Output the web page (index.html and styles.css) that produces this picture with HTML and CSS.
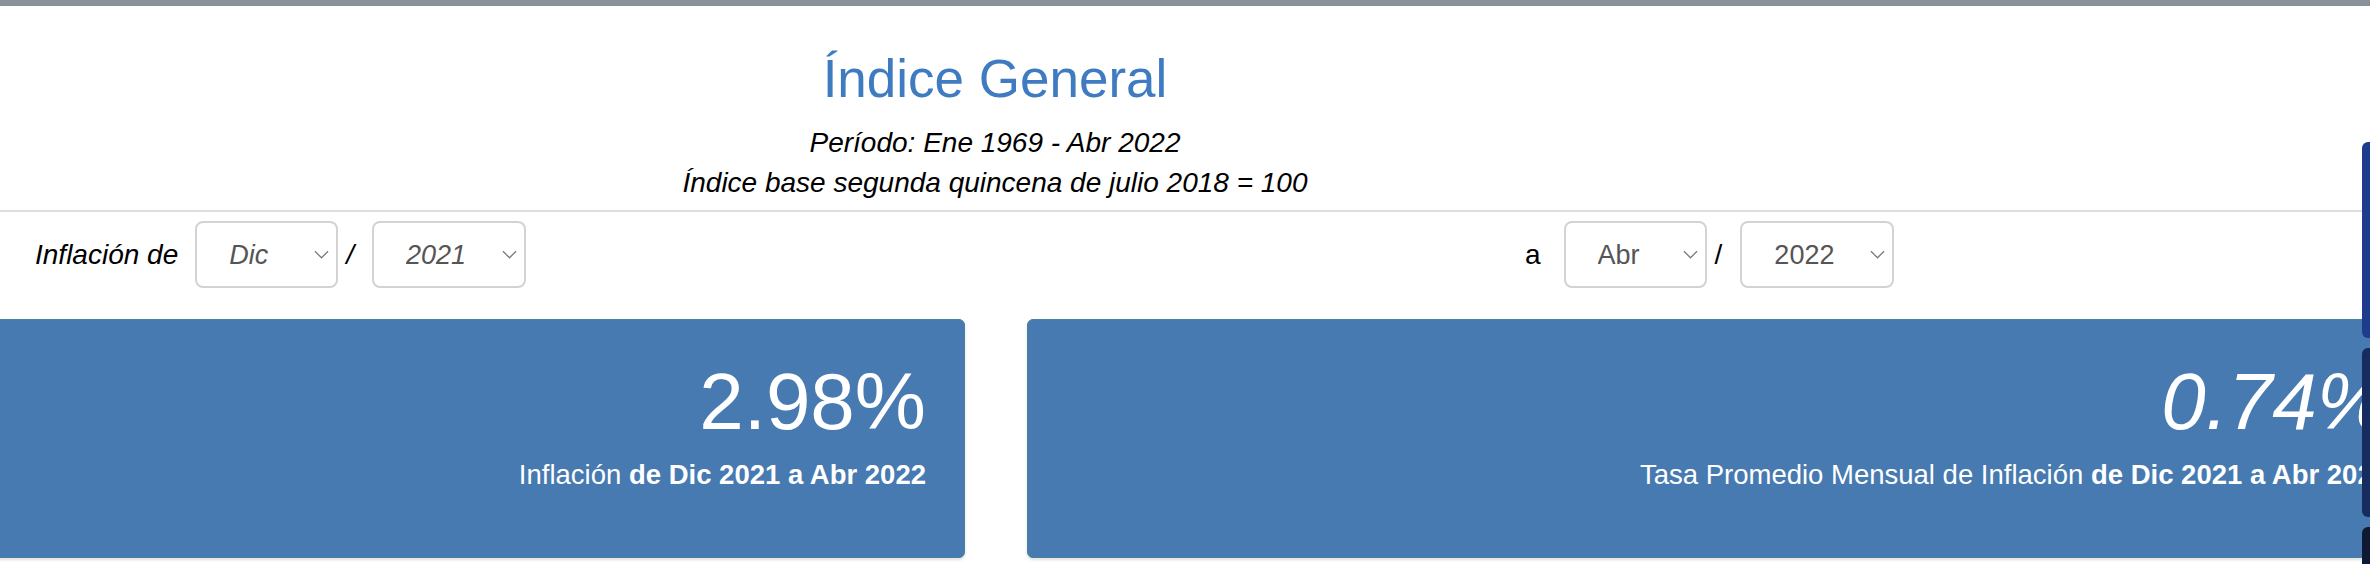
FILE: index.html
```html
<!DOCTYPE html>
<html lang="es">
<head>
    <meta charset="UTF-8">
    <meta name="viewport" content="width=device-width, initial-scale=1.0">
    <title>Índice General</title>
    <link rel="stylesheet" href="styles.css">
</head>
<body>
    <div class="topbar"></div>

    <div class="encabezado">
        <h1>Índice General</h1>
        <p>Período: Ene 1969 - Abr 2022</p>
        <p>Índice base segunda quincena de julio 2018 = 100</p>
    </div>

    <form class="filtros">
        <div class="grupo grupo-inicio">
            <label for="mesInicio">Inflación de</label>
            <div class="select select-mes">
                <select id="mesInicio">
                    <option>Dic</option>
                </select>
                <svg viewBox="0 0 16 9"><path d="M1 1l7 7 7-7"/></svg>
            </div>
            <span class="barra">/</span>
            <div class="select select-anio">
                <select id="anioInicio">
                    <option>2021</option>
                </select>
                <svg viewBox="0 0 16 9"><path d="M1 1l7 7 7-7"/></svg>
            </div>
        </div>

        <div class="grupo grupo-fin">
            <label for="mesFin">a</label>
            <div class="select select-mes">
                <select id="mesFin">
                    <option>Abr</option>
                </select>
                <svg viewBox="0 0 16 9"><path d="M1 1l7 7 7-7"/></svg>
            </div>
            <span class="barra">/</span>
            <div class="select select-anio">
                <select id="anioFin">
                    <option>2022</option>
                </select>
                <svg viewBox="0 0 16 9"><path d="M1 1l7 7 7-7"/></svg>
            </div>
        </div>
    </form>

    <div class="tarjetas">
        <div class="tarjeta">
            <div class="valor">2.98%</div>
            <div class="descripcion">Inflación <b>de Dic 2021 a Abr 2022</b></div>
        </div>
        <div class="tarjeta">
            <div class="valor valor-promedio">0.74%</div>
            <div class="descripcion">Tasa Promedio Mensual de Inflación <b>de Dic 2021 a Abr 2022</b></div>
        </div>
    </div>

    <div class="pestanas">
        <div class="pestana p1"></div>
        <div class="pestana p2"></div>
        <div class="pestana p3"></div>
    </div>
</body>
</html>
```

FILE: styles.css
```css
body {
    margin: 0;
    width: 2370px;
    height: 564px;
    overflow: hidden;
    background: #ffffff;
    font-family: "Liberation Sans", Arial, sans-serif;
    color: #000000;
}

.topbar {
    height: 6px;
    background: #8a9199;
}

.encabezado {
    width: 1990px;
    text-align: center;
    padding-top: 41px;
    padding-bottom: 7px;
}

h1 {
    margin: 0 0 12px 0;
    font-size: 53px;
    line-height: 64px;
    font-weight: normal;
    color: #3e7bc1;
}

.encabezado p {
    margin: 0;
    font-size: 28px;
    line-height: 40px;
    font-style: italic;
}

.filtros {
    display: grid;
    grid-template-columns: 1490px auto;
    align-items: center;
    border-top: 2px solid #dddddd;
    padding: 9px 0 31px 35px;
    margin: 0;
}

.grupo {
    display: flex;
    align-items: center;
    font-size: 28px;
}

.grupo-inicio {
    font-style: italic;
}

.grupo-inicio label {
    margin-right: 17px;
}

.grupo-fin label {
    margin-right: 23px;
}

.barra {
    margin: 0 18px 0 8px;
}

.select {
    position: relative;
    height: 67px;
}

.select-mes {
    width: 143px;
}

.select-anio {
    width: 154px;
}

.select select {
    appearance: none;
    -webkit-appearance: none;
    box-sizing: border-box;
    width: 100%;
    height: 100%;
    border: 2px solid #d3d3d3;
    border-radius: 8px;
    background: #ffffff;
    padding: 0 0 0 32px;
    font-family: inherit;
    font-size: 27px;
    font-style: inherit;
    color: #555555;
}

.select svg {
    position: absolute;
    right: 9px;
    top: 29px;
    width: 15px;
    height: 9px;
    fill: none;
    stroke: #777777;
    stroke-width: 1.3;
}

.tarjetas {
    display: grid;
    grid-template-columns: 1400px 1400px;
    gap: 62px;
    margin-left: -435px;
}

.tarjeta {
    box-sizing: border-box;
    height: 239px;
    background: #477ab0;
    border: 1px solid #4a8299;
    border-radius: 6px;
    box-shadow: 0 2px 3px rgba(0, 0, 0, 0.12);
    padding: 38px 38px 0 0;
    text-align: right;
    color: #ffffff;
}

.valor {
    font-size: 80px;
    line-height: 88px;
}

.valor-promedio {
    font-style: italic;
}

.descripcion {
    margin-top: 11px;
    font-size: 27.5px;
    line-height: 36px;
}

.pestanas {
    position: fixed;
    right: 0;
    top: 142px;
    width: 8px;
}

.pestana {
    border-radius: 6px 0 0 6px;
    margin-bottom: 10px;
}

.p1 {
    height: 196px;
    background: #1e3c8c;
}

.p2 {
    height: 169px;
    background: #162b5e;
}

.p3 {
    height: 60px;
    background: #0e1a33;
}
```
